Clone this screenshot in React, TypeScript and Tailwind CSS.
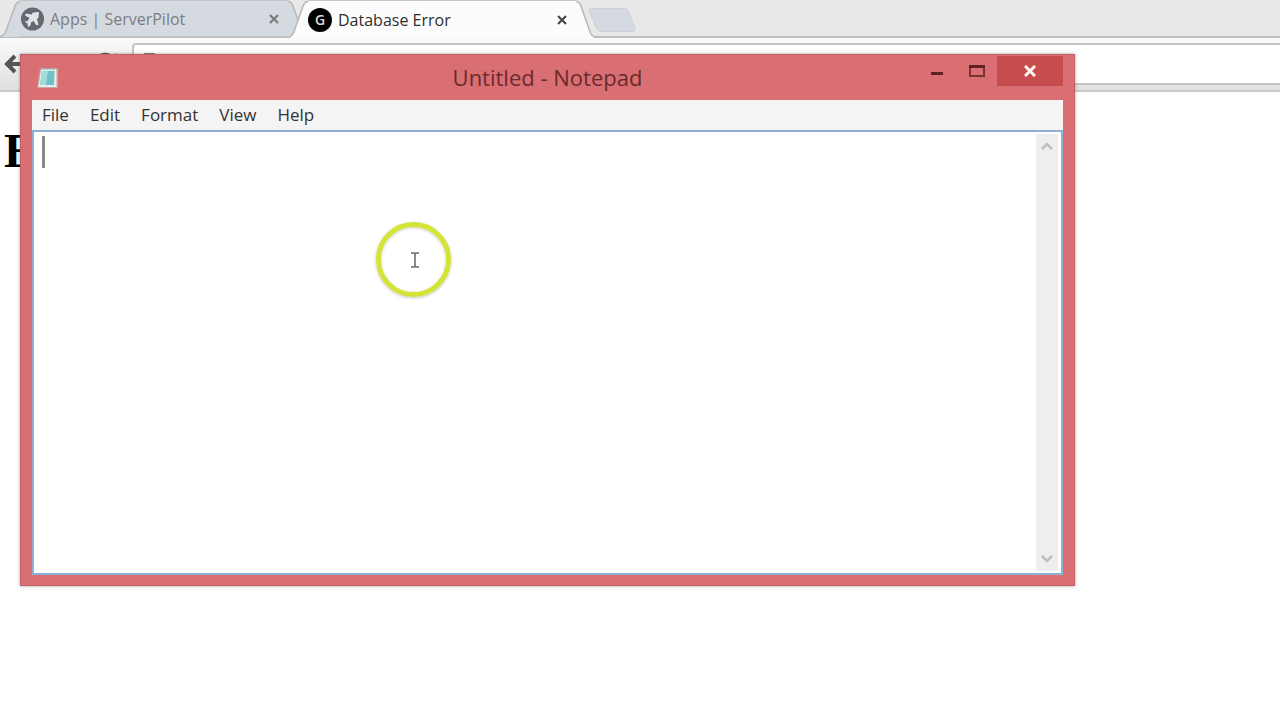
import type { ReactNode } from "react";
import clsx from "clsx";

const menus = ["File", "Edit", "Format", "View", "Help"];

type TabProps = {
  title: string;
  icon: ReactNode;
  active?: boolean;
};

function Tab({ title, icon, active }: TabProps) {
  const fill = active ? "#fcfcfc" : "#d5d9e0";

  return (
    <div className={clsx("flex h-[38px] w-[308px] shrink-0", active ? "relative z-10 -ml-5" : "pb-px")}>
      <svg viewBox="0 0 20 37" preserveAspectRatio="none" className="h-full w-5 shrink-0">
        <path d="M0 37 Q4 36 6 31 L15 6 Q17 1.5 20 1.5 V37 Z" fill={fill} />
        <path d="M0 36.5 Q4 36 6 31 L15 6 Q17 1.5 20 1.5" fill="none" stroke="#b8b8b8" strokeWidth="1.5" />
      </svg>
      <div
        className={clsx(
          "flex min-w-0 flex-1 items-center border-t border-[#c4c4c4]",
          active ? "bg-[#fcfcfc] text-[#2e2e2e]" : "border-b bg-[#d5d9e0] text-[#7b7e83]",
        )}
      >
        {icon}
        <span className="ml-1.5 flex-1 truncate text-base">{title}</span>
        <button aria-label={`Close ${title}`} className="mr-1 grid size-5 place-items-center">
          <svg viewBox="0 0 10 10" className={clsx("size-2.5", active ? "text-[#444444]" : "text-[#777777]")}>
            <path d="M1 1 L9 9 M9 1 L1 9" stroke="currentColor" strokeWidth="2" />
          </svg>
        </button>
      </div>
      <svg viewBox="0 0 20 37" preserveAspectRatio="none" className="h-full w-5 shrink-0">
        <path d="M20 37 Q16 36 14 31 L5 6 Q3 1.5 0 1.5 V37 Z" fill={fill} />
        <path d="M20 36.5 Q16 36 14 31 L5 6 Q3 1.5 0 1.5" fill="none" stroke="#b8b8b8" strokeWidth="1.5" />
      </svg>
    </div>
  );
}

function ServerPilotIcon() {
  return (
    <svg viewBox="0 0 24 24" className="size-6 shrink-0">
      <circle cx="12.5" cy="12" r="11.5" fill="#65696e" />
      <path
        d="M19 5 L13 5.500 L11.500 7.500 L6 6.500 L5 8.500 L9.500 11 L7.500 14 L4.500 14.500 L7.500 16.500 L8 20 L10.500 18.500 L11 15.500 L13.500 14 L16.500 18.500 L18.500 17.500 L17 12 L18.500 10.500 Z"
        fill="#dfe2e7"
      />
    </svg>
  );
}

function GIcon() {
  return (
    <span className="grid size-6 shrink-0 place-items-center rounded-full bg-black text-sm font-semibold text-[#dddddd]">
      G
    </span>
  );
}

function Browser() {
  return (
    <>
      <div className="flex h-[38px] border-b-2 border-[#bdbdbd] bg-[#e8e8e8]">
        <Tab title="Apps | ServerPilot" icon={<ServerPilotIcon />} />
        <Tab title="Database Error" icon={<GIcon />} active />
        <button aria-label="New tab" className="-ml-2 mt-2 h-6 w-12">
          <svg viewBox="0 0 48 24" className="h-6 w-12">
            <path
              d="M3 .5 H36 Q39 .5 40 3 L47 20 Q48 23.500 44 23.500 H14 Q10 23.500 9 21 L1 3 Q0 .5 3 .5 Z"
              fill="#d5d9e1"
              stroke="#cdd0d6"
            />
          </svg>
        </button>
      </div>
      <div className="flex h-[54px] items-center border-b-2 border-[#c8c8c8] bg-linear-to-b from-[#fafafa] to-[#e0e0e0] pl-1">
        <button aria-label="Back" className="w-6">
          <svg viewBox="0 0 24 24" className="size-6 text-[#555555]">
            <path d="M11 4 L3 12 L11 20 M3 12 H22" fill="none" stroke="currentColor" strokeWidth="4" />
          </svg>
        </button>
        <button aria-label="Reload" className="ml-16 w-7">
          <svg viewBox="0 0 28 28" className="size-7 text-[#555555]">
            <path d="M22 19 A10 10 0 1 1 20 7" fill="none" stroke="currentColor" strokeWidth="3" />
            <path d="M24 3 V12 H15 Z" fill="currentColor" />
          </svg>
        </button>
        <div className="ml-3 flex h-[42px] flex-1 items-center rounded-l border-2 border-r-0 border-[#c4c4c4] bg-white pl-2.5">
          <svg viewBox="0 0 16 22" className="h-[22px] w-4">
            <path d="M1 1 H10 L15 6 V21 H1 Z" fill="#ffffff" stroke="#777777" strokeWidth="2" />
          </svg>
          <input aria-label="Address" className="min-w-0 flex-1 outline-none" />
        </div>
      </div>
      <main className="pl-1 pt-8">
        <h1 className="font-['Liberation_Serif',serif] text-5xl leading-[54px] font-bold text-black">E</h1>
      </main>
    </>
  );
}

function NotepadIcon() {
  return (
    <svg viewBox="0 0 24 24" className="size-6">
      <path d="M4 2 H22 V22 H1 Z" fill="#c9a5a2" />
      <path d="M5 3 H20.500 V21 H2.500 Z" fill="#e6efeb" />
      <path d="M6 5 H18.500 L18 19 H4 Z" fill="#6fc0c6" />
      <path d="M6 5 H12 L10 19 H4 Z" fill="#a0dcdc" />
      <path d="M5 3 H20.500" stroke="#93aaa8" strokeWidth="2" strokeDasharray="1.500 1.500" />
    </svg>
  );
}

function ScrollButton({ label, d }: { label: string; d: string }) {
  return (
    <button aria-label={label} className="grid h-6 place-items-center">
      <svg viewBox="0 0 12 8" className="h-2 w-3">
        <path d={d} fill="none" stroke="#bdbdbd" strokeWidth="2.500" />
      </svg>
    </button>
  );
}

function Notepad() {
  return (
    <section className="absolute top-[54px] right-[205px] bottom-[134px] left-5 flex flex-col border border-[#c0616a] bg-[#d96f72] px-[11px] pb-2.5 shadow-[0_0_3px_rgba(120,60,60,0.5)]">
      <header className="grid h-[45px] grid-cols-[1fr_auto_1fr] items-center">
        <div className="pl-1">
          <NotepadIcon />
        </div>
        <h2 className="text-[22px] text-[#6b2a2e]">Untitled - Notepad</h2>
        <div className="mt-px flex h-[30px] self-start justify-self-end">
          <button aria-label="Minimize" className="grid w-10 place-items-center">
            <svg viewBox="0 0 14 14" className="size-3.5">
              <path d="M1 9.500 H13" stroke="#5e2022" strokeWidth="3" />
            </svg>
          </button>
          <button aria-label="Maximize" className="grid w-10 place-items-center">
            <svg viewBox="0 0 18 14" className="h-3.5 w-[18px]">
              <path d="M2 2 H16 V12 H2 Z" fill="none" stroke="#7b3235" strokeWidth="2" />
              <path d="M1 2.500 H17" stroke="#5e2022" strokeWidth="3" />
            </svg>
          </button>
          <button aria-label="Close" className="grid w-[66px] place-items-center bg-[#c74c4e]">
            <svg viewBox="0 0 12 12" className="size-3">
              <path d="M1 1 L11 11 M11 1 L1 11" stroke="#fff4ee" strokeWidth="3" />
            </svg>
          </button>
        </div>
      </header>
      <nav className="flex h-[30px] items-center gap-[21px] bg-[#f4f4f4] pl-2.5 text-[17px] text-[#333333]">
        {menus.map((menu) => (
          <button key={menu}>{menu}</button>
        ))}
      </nav>
      <div className="relative flex min-h-0 flex-1 border-2 border-[#8fb0d6] bg-white">
        <textarea aria-label="Document" className="flex-1 resize-none px-2 py-1 text-2xl outline-none" />
        <span className="absolute top-1 left-2 h-8 w-[3px] bg-[#8a8a8a]" />
        <div className="mt-0.5 mr-[3px] mb-0.5 flex w-[22px] flex-col justify-between bg-[#eeeeee]">
          <ScrollButton label="Scroll up" d="M1 7 L6 2 L11 7" />
          <ScrollButton label="Scroll down" d="M1 1 L6 6 L11 1" />
        </div>
      </div>
    </section>
  );
}

function Pointer() {
  return (
    <div className="pointer-events-none absolute top-[222px] left-[376px] grid size-[75px] place-items-center rounded-full border-[5px] border-[#d4e436] shadow-[0_1px_3px_rgba(0,0,0,0.25),inset_0_1px_3px_rgba(0,0,0,0.2)]">
      <svg viewBox="0 0 12 16" className="h-4 w-3">
        <path d="M3 1 H6 L7 2 L8 1 H11 M7 2 V14 M3 15 H6 L7 14 L8 15 H11" fill="none" stroke="#666666" strokeWidth="1.500" />
      </svg>
    </div>
  );
}

export default function App() {
  return (
    <div className="relative min-h-screen overflow-hidden bg-white font-['Open_Sans','Noto_Sans',sans-serif]">
      <Browser />
      <Notepad />
      <Pointer />
    </div>
  );
}
